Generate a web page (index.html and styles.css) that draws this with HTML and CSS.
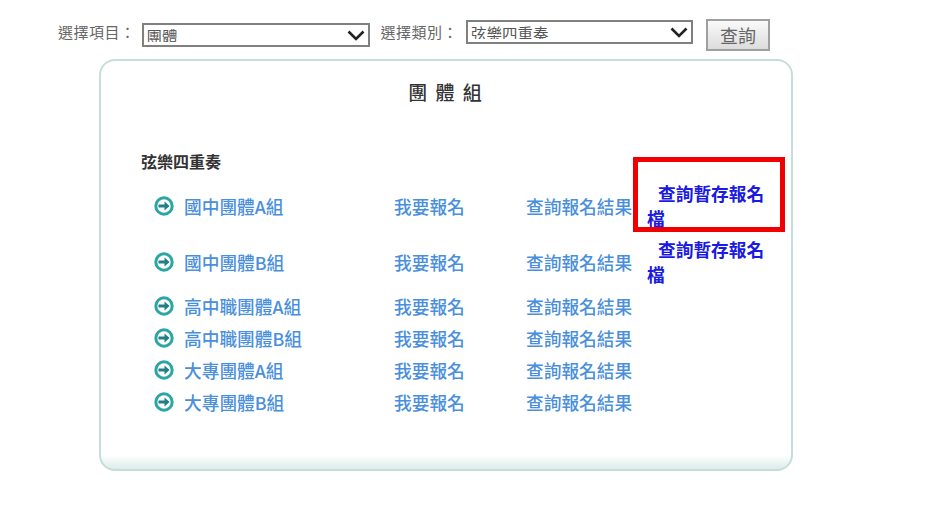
FILE: index.html
```html
<!DOCTYPE html>
<html lang="zh-Hant">
<head>
    <meta charset="UTF-8" />
    <title>查詢報名</title>
    <link rel="stylesheet" href="styles.css">
</head>
<body>
    <svg class="icon-defs" width="0" height="0">
        <symbol id="go" viewBox="0 0 20 20">
            <circle cx="10" cy="10" r="8.2" fill="#fff" stroke="#2aa6a6" stroke-width="3"/>
            <path d="M4.5 8.6h6V5.6L15.6 10l-5.100 4.400v-3h-6z" fill="#1f7f86"/>
        </symbol>
    </svg>

    <!-- 查詢條件 -->
    <div class="search-bar">
        <label class="label" for="item">選擇項目：</label>
        <select id="item" class="select select-item"><option>團體</option></select>
        <label class="label label-type" for="type">選擇類別：</label>
        <select id="type" class="select select-type"><option>弦樂四重奏</option></select>
        <button class="btn">查詢</button>
    </div>

    <div class="panel">
        <h2 class="panel-title">團 體 組</h2>
        <div class="group-name">弦樂四重奏</div>

        <table class="sign-table">
            <tr class="row-tall">
                <td class="col-name"><svg class="go-icon"><use href="#go"/></svg><a href="#">國中團體A組</a></td>
                <td class="col-apply"><a href="#">我要報名</a></td>
                <td class="col-result"><a href="#">查詢報名結果</a></td>
                <td class="col-draft"><a href="#">查詢暫存報名檔</a></td>
            </tr>
            <tr class="row-tall">
                <td class="col-name"><svg class="go-icon"><use href="#go"/></svg><a href="#">國中團體B組</a></td>
                <td class="col-apply"><a href="#">我要報名</a></td>
                <td class="col-result"><a href="#">查詢報名結果</a></td>
                <td class="col-draft"><a href="#">查詢暫存報名檔</a></td>
            </tr>
            <tr>
                <td class="col-name"><svg class="go-icon"><use href="#go"/></svg><a href="#">高中職團體A組</a></td>
                <td class="col-apply"><a href="#">我要報名</a></td>
                <td class="col-result"><a href="#">查詢報名結果</a></td>
                <td class="col-draft"></td>
            </tr>
            <tr>
                <td class="col-name"><svg class="go-icon"><use href="#go"/></svg><a href="#">高中職團體B組</a></td>
                <td class="col-apply"><a href="#">我要報名</a></td>
                <td class="col-result"><a href="#">查詢報名結果</a></td>
                <td class="col-draft"></td>
            </tr>
            <tr>
                <td class="col-name"><svg class="go-icon"><use href="#go"/></svg><a href="#">大專團體A組</a></td>
                <td class="col-apply"><a href="#">我要報名</a></td>
                <td class="col-result"><a href="#">查詢報名結果</a></td>
                <td class="col-draft"></td>
            </tr>
            <tr>
                <td class="col-name"><svg class="go-icon"><use href="#go"/></svg><a href="#">大專團體B組</a></td>
                <td class="col-apply"><a href="#">我要報名</a></td>
                <td class="col-result"><a href="#">查詢報名結果</a></td>
                <td class="col-draft"></td>
            </tr>
        </table>

        <!-- 紅框標示 -->
        <div class="highlight"></div>
    </div>
</body>
</html>
```

FILE: styles.css
```css
* {
    margin: 0;
    padding: 0;
    box-sizing: border-box;
}

body {
    background: #fff;
    font-family: "Noto Sans CJK TC", "Noto Sans", sans-serif;
    color: #333;
}

.icon-defs {
    position: absolute;
}

.search-bar {
    display: flex;
    align-items: flex-start;
    height: 59px;
    padding: 19px 0 0 58px;
}

.label {
    font-size: 15px;
    line-height: 26px;
    letter-spacing: 0.5px;
    color: #666;
}

.label-type {
    margin-left: 11px;
}

.select {
    appearance: none;
    height: 24px;
    padding: 0 30px 3px 3px;
    border: 2px solid #808080;
    border-radius: 0;
    background: #fff url("data:image/svg+xml,%3Csvg xmlns='http://www.w3.org/2000/svg' width='18' height='11'%3E%3Cpath d='M1.500 1.500 9 9l7.500-7.500' fill='none' stroke='%23222' stroke-width='2.600'/%3E%3C/svg%3E") no-repeat right 3px center;
    font-family: inherit;
    font-size: 15.500px;
    color: #555;
}

.select-item {
    width: 228px;
    margin: 4px 0 0 6px;
}

.select-type {
    width: 227px;
    margin: 1px 0 0 8px;
}

.btn {
    width: 64px;
    height: 32px;
    margin: 0 0 0 13px;
    border: 2px solid #a0a0a0;
    background: linear-gradient(#fafafa, #dcdcdc);
    font-family: inherit;
    font-size: 18px;
    color: #666;
}

.panel {
    position: relative;
    width: 694px;
    height: 412px;
    margin-left: 99px;
    padding: 18px 0 0 40px;
    border: 2px solid #c6dedb;
    border-radius: 16px;
    background: linear-gradient(to top, #dcecea, #fff 14px);
}

.panel-title {
    margin-left: -40px;
    font-size: 19px;
    font-weight: 500;
    line-height: 26px;
    letter-spacing: 2px;
    text-align: center;
    color: #333;
}

.group-name {
    margin-top: 44px;
    font-size: 16px;
    font-weight: 700;
    line-height: 24px;
    color: #333;
}

.sign-table {
    margin: 5px 0 0 13px;
    border-collapse: collapse;
    table-layout: fixed;
    width: 623px;
}

.sign-table td {
    height: 32px;
    font-size: 17.700px;
    font-weight: 500;
    line-height: 25px;
    vertical-align: middle;
}

.sign-table a {
    color: #4a8fdc;
    text-decoration: none;
}

.row-tall td {
    height: 56px;
}

.col-name {
    width: 240px;
    white-space: nowrap;
}

.col-apply {
    width: 132px;
}

.col-result {
    width: 121px;
}

.sign-table .col-draft {
    width: 130px;
    font-weight: 700;
    text-indent: 11px;
}

.sign-table .col-draft a {
    color: #1a1ae0;
}

.go-icon {
    width: 20px;
    height: 20px;
    margin: 0 10px 0 0;
    vertical-align: -2px;
}

.highlight {
    position: absolute;
    left: 532px;
    top: 96px;
    width: 152px;
    height: 75px;
    border: 5px solid #f00000;
}
```
